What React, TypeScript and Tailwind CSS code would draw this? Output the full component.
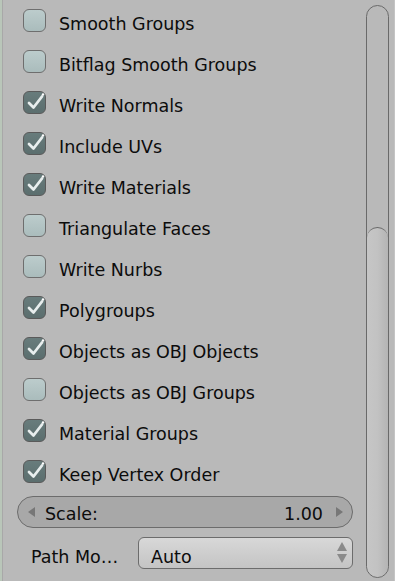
import React from "react";

const items: [string, boolean][] = [
  ["Smooth Groups", false],
  ["Bitflag Smooth Groups", false],
  ["Write Normals", true],
  ["Include UVs", true],
  ["Write Materials", true],
  ["Triangulate Faces", false],
  ["Write Nurbs", false],
  ["Polygroups", true],
  ["Objects as OBJ Objects", true],
  ["Objects as OBJ Groups", false],
  ["Material Groups", true],
  ["Keep Vertex Order", true],
];

function Box({ checked }: { checked: boolean }) {
  if (checked) {
    return (
      <div className="relative w-[23px] h-[23px] rounded-[6px] border border-[#5a5a5a] bg-gradient-to-b from-[#687c7c] to-[#5b6e6e]">
        <svg className="absolute left-[-1px] top-[-1px]" width="25" height="25" viewBox="0 0 25 25">
          <polyline points="6,12 10.5,16.5 19,5.5" fill="none" stroke="#e8eeee" strokeWidth="2.8" strokeLinecap="round" strokeLinejoin="round" />
          <circle cx="20" cy="3.5" r="1.2" fill="#ffffff" />
        </svg>
      </div>
    );
  }
  return (
    <div className="w-[23px] h-[23px] rounded-[6px] border border-[#6e6e6e] bg-gradient-to-b from-[#bccccc] to-[#aabcbc]" />
  );
}

export default function App() {
  return (
    <div
      className="w-[395px] h-[581px] bg-[#b9b9b9] flex overflow-hidden text-[#0c0c0c]"
      style={{ fontFamily: '"DejaVu Sans", sans-serif' }}
    >
      <div className="w-[3px] h-full bg-[#b9c6b9] border-r border-[#a8a8a8]" />
      <div className="flex-1 flex flex-col">
        <div className="flex flex-col pt-[1px]">
          {items.map(([label, checked]) => (
            <div key={label} className="h-[41px] flex items-center pl-[20px]">
              <div className="mb-[3px]">
                <Box checked={checked} />
              </div>
              <span className="ml-[13px] mt-[6px] text-[17.5px] leading-none">{label}</span>
            </div>
          ))}
        </div>
        <div className="mt-[3px] ml-[14px] w-[336px] h-[32px] rounded-full border border-[#6c6c6c] bg-[#a8a8a8] flex items-center text-[17.5px] leading-none">
          <svg width="8" height="10" viewBox="0 0 8 10" className="ml-[10px]">
            <polygon points="7,0 7,10 0,5" fill="#777" />
          </svg>
          <span className="ml-[9px] mt-[6px]">Scale:</span>
          <span className="ml-auto mt-[6px]">1.00</span>
          <svg width="8" height="10" viewBox="0 0 8 10" className="ml-[12px] mr-[9px]">
            <polygon points="1,0 1,10 8,5" fill="#777" />
          </svg>
        </div>
        <div className="mt-[9px] flex items-center h-[32px] text-[17.5px] leading-none">
          <span className="ml-[28px] w-[107px] mt-[9px]">Path Mo…</span>
          <div className="w-[215px] h-[32px] rounded-[6px] border border-[#6c6c6c] bg-gradient-to-b from-[#d8d8d8] to-[#c4c4c4] flex items-center">
            <span className="ml-[12px] mt-[9px]">Auto</span>
            <svg width="10" height="24" viewBox="0 0 10 24" className="ml-auto mr-[5px]">
              <polygon points="5,1 10,10 0,10" fill="#8a8a8a" />
              <polygon points="0,13 10,13 5,22" fill="#8a8a8a" />
            </svg>
          </div>
        </div>
      </div>
      <div className="w-[23px] mr-[5px] mt-[5px] mb-[3px] rounded-full border border-[#6a6a6a] flex flex-col justify-end overflow-hidden">
        <div className="h-[350px] rounded-full border-t border-[#6a6a6a] bg-gradient-to-r from-[#c6c6c6] via-[#c2c2c2] to-[#b4b4b4]" />
      </div>
      <div className="w-[1px] h-full bg-[#c4c4c4]" />
    </div>
  );
}
